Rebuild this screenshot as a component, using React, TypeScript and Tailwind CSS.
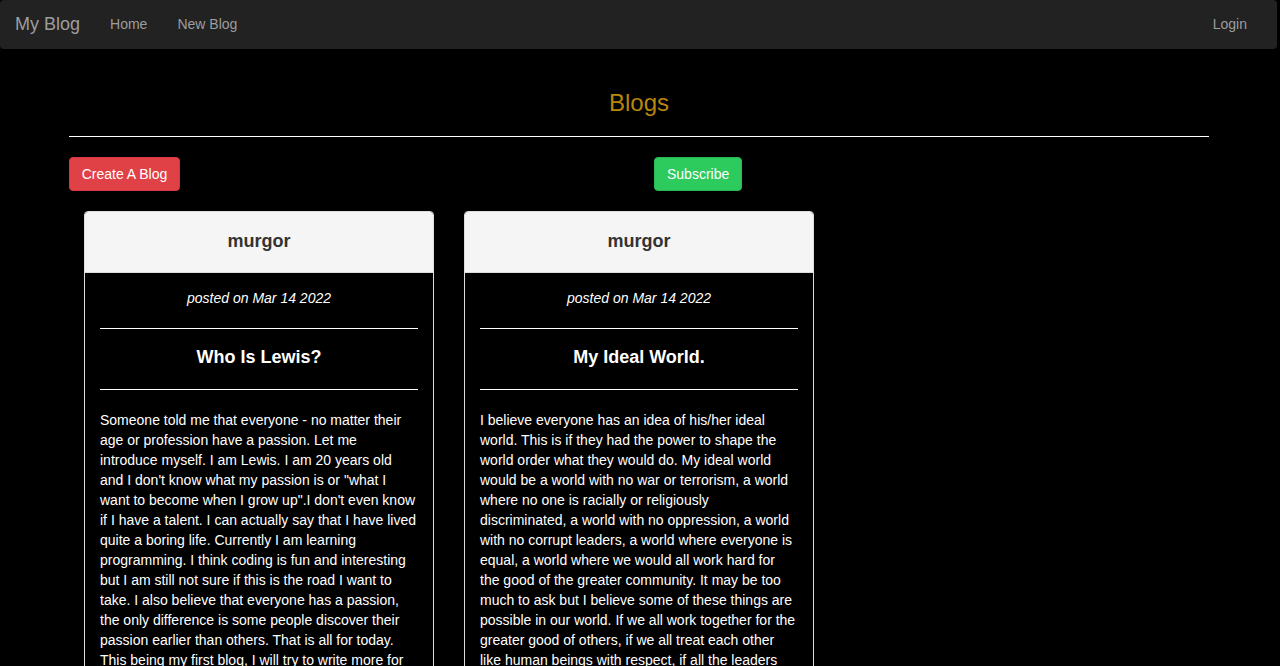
const posts = [
  {
    author: "murgor",
    date: "Mar 14 2022",
    title: "Who Is Lewis?",
    body:
      "Someone told me that everyone - no matter their age or profession have a passion. Let me introduce myself. I am Lewis. I am 20 years old and I don't know what my passion is or \"what I want to become when I grow up\".I don't even know if I have a talent. I can actually say that I have lived quite a boring life. Currently I am learning programming. I think coding is fun and interesting but I am still not sure if this is the road I want to take. I also believe that everyone has a passion, the only difference is some people discover their passion earlier than others. That is all for today. This being my first blog, I will try to write more for you guys. Thank you for reading.",
  },
  {
    author: "murgor",
    date: "Mar 14 2022",
    title: "My Ideal World.",
    body:
      "I believe everyone has an idea of his/her ideal world. This is if they had the power to shape the world order what they would do. My ideal world would be a world with no war or terrorism, a world where no one is racially or religiously discriminated, a world with no oppression, a world with no corrupt leaders, a world where everyone is equal, a world where we would all work hard for the good of the greater community. It may be too much to ask but I believe some of these things are possible in our world. If we all work together for the greater good of others, if we all treat each other like human beings with respect, if all the leaders would lead with integrity, our world would be a better place.",
  },
];

function Navbar() {
  return (
    <nav className="flex h-[49px] w-[1277px] items-center justify-between rounded-[4px] bg-[#222] pb-[2px]">
      <div className="flex items-center">
        <a href="#" className="px-[15px] text-[18px] leading-[20px] text-[#9d9d9d]">
          My Blog
        </a>
        <a href="#" className="px-[15px] text-[14px] leading-[20px] text-[#9d9d9d]">
          Home
        </a>
        <a href="#" className="px-[15px] text-[14px] leading-[20px] text-[#9d9d9d]">
          New Blog
        </a>
      </div>
      <a href="#" className="mr-[15px] px-[15px] text-[14px] leading-[20px] text-[#9d9d9d]">
        Login
      </a>
    </nav>
  );
}

function BlogCard({ post }: { post: (typeof posts)[number] }) {
  return (
    <div className="overflow-hidden rounded-[4px] border border-[#ddd] bg-black">
      <div className="flex h-[61px] items-center justify-center border-b border-[#ddd] bg-[#f5f5f5] pb-[2px]">
        <h3 className="text-[18px] font-bold leading-[20px] text-[#333]">{post.author}</h3>
      </div>
      <div className="px-[15px] pt-[15px]">
        <p className="text-center text-[14px] italic leading-[20px] text-white">
          posted on {post.date}
        </p>
        <hr className="mt-[20px] border-t border-white" />
        <h4 className="pb-[22px] pt-[18px] text-center text-[18px] font-bold leading-[20px] text-white">
          {post.title}
        </h4>
        <hr className="border-t border-white" />
        <p className="pb-[15px] pt-[20px] text-[14px] leading-[20px] text-white">{post.body}</p>
      </div>
    </div>
  );
}

export default function App() {
  return (
    <div className="min-h-screen bg-black font-['Liberation_Sans',Arial,sans-serif]">
      <Navbar />
      <main className="ml-[69px] w-[1140px]">
        <h2 className="mt-[41px] text-center text-[24px] leading-[26px] text-[#b8860b]">Blogs</h2>
        <hr className="mt-[20px] border-t border-white" />
        <div className="mt-[20px] grid grid-cols-2">
          <div>
            <button className="h-[34px] w-[111px] rounded-[4px] border border-[#d9363e] bg-[#e04146] text-[14px] text-white">
              Create A Blog
            </button>
          </div>
          <div className="pl-[15px]">
            <button className="h-[34px] rounded-[4px] border border-[#28b955] bg-[#2dca5e] px-[12px] text-[14px] text-white">
              Subscribe
            </button>
          </div>
        </div>
        <div className="mt-[20px] grid grid-cols-3 items-start">
          {posts.map((p) => (
            <div key={p.title} className="px-[15px]">
              <BlogCard post={p} />
            </div>
          ))}
        </div>
      </main>
    </div>
  );
}
